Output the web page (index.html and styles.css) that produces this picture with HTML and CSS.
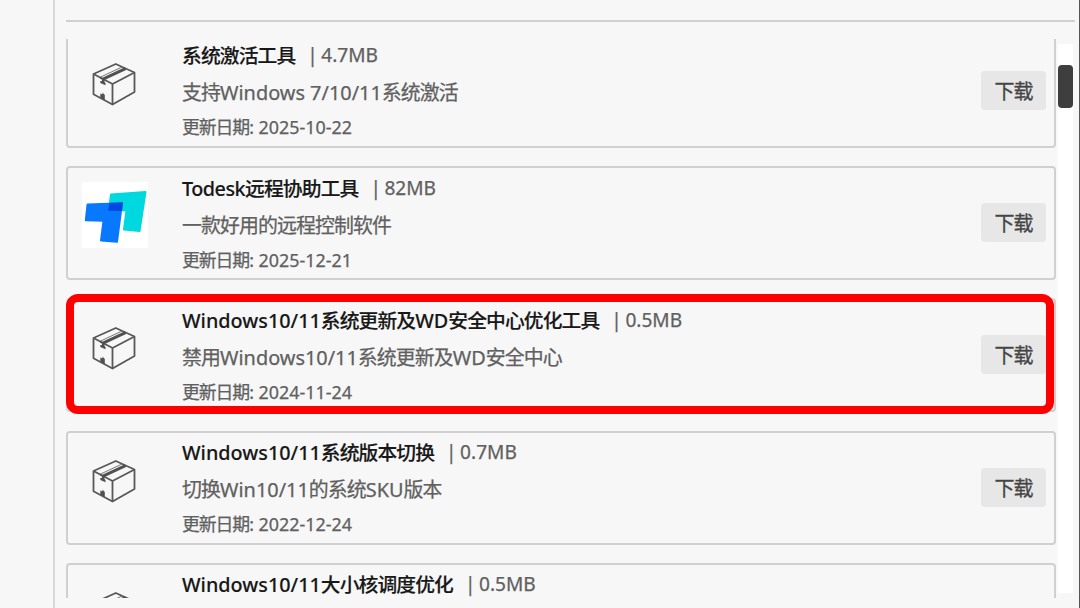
FILE: index.html
```html
<!DOCTYPE html>
<html lang="zh-CN">
<head>
<meta charset="utf-8">
<title>工具下载</title>
<link rel="stylesheet" href="styles.css">
</head>
<body>
<svg class="defs" width="0" height="0">
  <symbol id="box" viewBox="0 0 66 66">
    <g fill="none" stroke="#585858" stroke-width="1.8" stroke-linejoin="round">
      <path d="M11.5 24 33.8 14 52.5 22.5V42L30.5 54.5 11.5 44.3Z"/>
      <path d="M11.5 24 30.5 34 52.5 22.5M30.5 34V54.5"/>
    </g>
    <path d="M21 29.2 43.5 18.6" stroke="#505050" stroke-width="3"/>
    <path d="M18.3 27.2 40 17" stroke="#777" stroke-width="1"/>
    <path fill="#505050" d="M18 26.8 22.5 29V32L23.5 33V35.2L18.3 33V31H20V29.5L18 28.5ZM18.3 48V43.5L20.4 44.5V42.5L22.8 45V50Z"/>
  </symbol>
</svg>
<div class="window">
  <aside class="side"></aside>
  <main class="main">
    <div class="rule"></div>
    <div class="scroll">
      <div class="viewport">
        <div class="list">
          <article class="card">
            <svg class="icon"><use href="#box"/></svg>
            <div class="info">
              <h2 class="title"><span class="name"><span class="zh">系统激活工具</span></span><span class="size"><span class="bar">|</span>4.7MB</span></h2>
              <p class="desc"><span class="zh">支持</span>Windows 7/10/11<span class="zh">系统激活</span></p>
              <p class="date"><span class="zh">更新日期</span>: 2025-10-22</p>
            </div>
            <button class="get"><span class="zh">下载</span></button>
          </article>
          <article class="card">
            <svg class="icon" viewBox="0 0 66 66">
              <rect width="66" height="66" fill="#fff"/>
              <path fill="#00d8df" stroke="#00d8df" stroke-width="2" stroke-linejoin="round" d="M29 12.4 63.5 10 57.5 49 42 47.5 44.5 28.5 27 28Z"/>
              <path fill="#0878ff" stroke="#0878ff" stroke-width="2" stroke-linejoin="round" d="M5.5 22.5 40 21.2 35 59.8 19 58.4 21.5 38.8 3.8 38.3Z"/>
              <path fill="#0048df" d="M27.5 21 41 20.2 40 29 26 28.8Z"/>
            </svg>
            <div class="info">
              <h2 class="title"><span class="name latin">Todesk<span class="zh">远程协助工具</span></span><span class="size"><span class="bar">|</span>82MB</span></h2>
              <p class="desc"><span class="zh">一款好用的远程控制软件</span></p>
              <p class="date"><span class="zh">更新日期</span>: 2025-12-21</p>
            </div>
            <button class="get"><span class="zh">下载</span></button>
          </article>
          <article class="card marked">
            <svg class="icon"><use href="#box"/></svg>
            <div class="info">
              <h2 class="title"><span class="name">Windows10/11<span class="zh">系统更新及</span>WD<span class="zh">安全中心优化工具</span></span><span class="size"><span class="bar">|</span>0.5MB</span></h2>
              <p class="desc"><span class="zh">禁用</span>Windows10/11<span class="zh">系统更新及</span>WD<span class="zh">安全中心</span></p>
              <p class="date"><span class="zh">更新日期</span>: 2024-11-24</p>
            </div>
            <button class="get"><span class="zh">下载</span></button>
          </article>
          <article class="card">
            <svg class="icon"><use href="#box"/></svg>
            <div class="info">
              <h2 class="title"><span class="name">Windows10/11<span class="zh">系统版本切换</span></span><span class="size"><span class="bar">|</span>0.7MB</span></h2>
              <p class="desc"><span class="zh">切换</span>Win10/11<span class="zh">的系统</span>SKU<span class="zh">版本</span></p>
              <p class="date"><span class="zh">更新日期</span>: 2022-12-24</p>
            </div>
            <button class="get"><span class="zh">下载</span></button>
          </article>
          <article class="card">
            <svg class="icon"><use href="#box"/></svg>
            <div class="info">
              <h2 class="title"><span class="name">Windows10/11<span class="zh">大小核调度优化</span></span><span class="size"><span class="bar">|</span>0.5MB</span></h2>
            </div>
          </article>
        </div>
      </div>
      <div class="track"><div class="thumb"></div></div>
    </div>
  </main>
</div>
</body>
</html>
```
FILE: styles.css
```css
* { box-sizing: border-box; }
body {
  margin: 0;
  background: #f7f7f7;
  font-family: "Noto Sans", "Noto Sans CJK SC", sans-serif;
  color: #606060;
}
.defs { display: block; height: 0; }
.window {
  display: flex;
  width: 1080px;
  height: 608px;
  overflow: hidden;
  border-right: 1px solid #555;
}
.side { flex: 0 0 55px; border-right: 2px solid #d8d8d8; }
.main { flex: 1; padding: 20px 4px 0 11px; }
.rule { height: 2px; background: #d0d0d0; }
.scroll { display: flex; gap: 2px; margin-top: 17px; height: 559px; }
.viewport { flex: 0 0 990px; overflow: hidden; }
.list { display: grid; grid-auto-rows: 114px; row-gap: 18.3px; margin-top: -5.2px; }
.card {
  position: relative;
  display: flex;
  align-items: flex-start;
  padding: 14px 8px 0 14px;
  border: 2px solid #d0d0d0;
  border-radius: 4px;
}
.marked::after {
  content: "";
  position: absolute;
  inset: -6px 0 -4px -2px;
  border: 8px solid #f00;
  border-radius: 12px;
}
.icon { flex: none; width: 66px; height: 66px; }
.info { flex: 1; margin: -12.6px 0 0 34px; -webkit-text-stroke: 0.25px; }
.title, .desc, .date { margin: 0; white-space: nowrap; font-weight: 400; }
.title { display: flex; gap: 12px; font-size: 19.8px; line-height: 36px; }
.name { color: #181818; font-weight: 500; -webkit-text-stroke: 0.15px; }
.latin { letter-spacing: -0.5px; }
.size { font-size: 19.1px; }
.bar { margin-right: 3.5px; }
.desc { font-size: 19.9px; line-height: 36px; }
.date { font-size: 17.9px; line-height: 31px; }
.date .zh { letter-spacing: -1.1px; }
.zh { font-family: "Noto Sans CJK SC", sans-serif; letter-spacing: -0.9px; }
.get {
  flex: none;
  width: 65px;
  height: 39px;
  margin-top: 21px;
  padding: 0;
  border: 0;
  border-radius: 4px;
  background: #e7e7e7;
  color: #444;
  font-size: 20px;
  -webkit-text-stroke: 0.3px;
}
.track { width: 15px; height: 549px; margin-top: 5px; padding-top: 21px; background: #fff; }
.thumb { height: 43px; border-radius: 4px; background: #3e3e3e; }
```
